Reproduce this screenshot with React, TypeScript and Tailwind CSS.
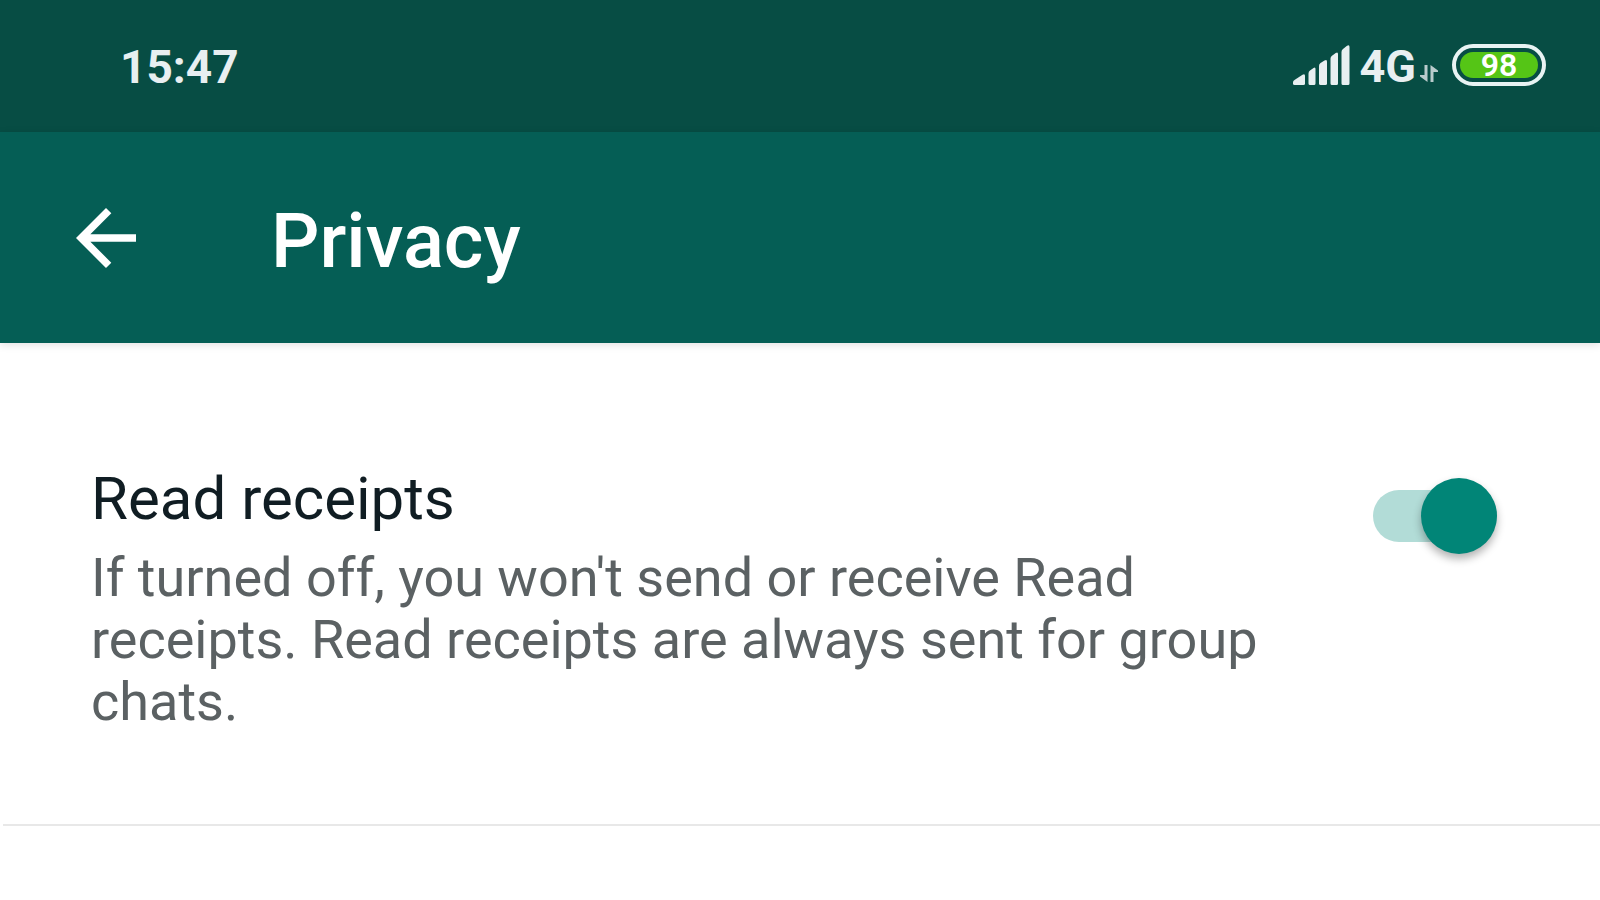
import { useState } from "react";

function SignalIcon() {
  return (
    <svg viewBox="0 0 57 40" className="h-10 w-[57px]" fill="#e8eff1" aria-hidden="true">
      <path d="M1.500 35 9.500 29.800Q12 28.300 12 31V38.500Q12 40 10.500 40H1.500Q0 40 0 38.500V37.300Q0 36 1.500 35Z" />
      <path d="M15.500 28.500Q15.500 26.600 17 25.600L20.500 23Q22.500 21.600 22.500 24V38.500Q22.500 40 21 40H17Q15.500 40 15.500 38.500Z" />
      <path d="M26 21Q26 19 27.500 18L31.500 15.500Q34 14 34 16.500V38.500Q34 40 32.500 40H27.500Q26 40 26 38.500Z" />
      <path d="M37.500 13.500Q37.500 11.700 39 10.700L42.700 8Q45 6.500 45 9V38.500Q45 40 43.500 40H39Q37.500 40 37.500 38.500Z" />
      <path d="M48.500 7Q48.500 5 50 4L53.700 1Q56.500-.8 56.500 2V38.500Q56.500 40 55 40H50Q48.500 40 48.500 38.500Z" />
    </svg>
  );
}

function DataArrowsIcon() {
  return (
    <svg viewBox="0 0 18 17" className="h-[17px] w-[18px]" fill="#b9cbcc" aria-hidden="true">
      <path d="M4.500 0H7.500V17L0 11.500V10H4.500Z" />
      <path d="M10.500 17H13.500V7H18V5.500L10.500 0Z" />
    </svg>
  );
}

function StatusBar() {
  return (
    <div className="flex h-[132px] items-center justify-between bg-[#074d44] pb-0.5 pl-30 pr-[54px] font-bold text-[#e8eff1]">
      <time className="pt-1 text-[46px] leading-[56px]">15:47</time>
      <div className="flex items-center">
        <SignalIcon />
        <span className="ml-2.5 pt-1 text-[45px] leading-[56px]">4G</span>
        <div className="ml-1 pt-4">
          <DataArrowsIcon />
        </div>
        <div className="ml-3.5 h-[42px] w-[94px] rounded-full border-4 border-[#e8f3f3] p-1">
          <div className="flex h-full items-center justify-center rounded-full bg-[#55c516] text-[32px] font-semibold leading-none text-white">
            98
          </div>
        </div>
      </div>
    </div>
  );
}

function AppBar() {
  return (
    <header className="relative flex h-[211px] items-center bg-[#055e55] pl-[76px] text-white shadow-[0_2px_8px_rgba(0,0,0,0.12)]">
      <button type="button" aria-label="Back" className="cursor-pointer">
        <svg viewBox="0 0 60 60" className="size-15" fill="currentColor" aria-hidden="true">
          <path d="M60 26.250H14.360L35.330 5.290L30 0L0 30L30 60L35.290 54.710L14.360 33.750H60Z" />
        </svg>
      </button>
      <h1 className="ml-[135px] pt-1.5 text-[76px] font-medium leading-[88px]">Privacy</h1>
    </header>
  );
}

export default function App() {
  const [enabled, setEnabled] = useState(true);

  return (
    <div className="min-h-screen bg-white font-[Roboto,sans-serif]">
      <StatusBar />
      <AppBar />
      <main>
        <section className="ml-[3px] flex items-start justify-between border-b-2 border-[#e8e8e8] pb-[91px] pl-22 pr-[103px] pt-[120px]">
          <div className="max-w-[1190px]">
            <label htmlFor="read-receipts" className="block text-[60px] leading-[72px] text-[#101d23]">
              Read receipts
            </label>
            <p
              id="read-receipts-note"
              className="mt-3 text-[54px] leading-[62px] text-[#5b6163] [font-variant-ligatures:none]"
            >
              If turned off, you won't send or receive Read receipts. Read receipts are always sent for group chats.
            </p>
          </div>
          <input
            id="read-receipts"
            type="checkbox"
            role="switch"
            aria-describedby="read-receipts-note"
            checked={enabled}
            onChange={(event) => setEnabled(event.target.checked)}
            className="mt-[27px] flex h-[52px] w-[124px] shrink-0 cursor-pointer appearance-none items-center rounded-full bg-[#bdbdbd] before:size-[76px] before:shrink-0 before:rounded-full before:bg-[#f1f1f1] before:shadow-[0_5px_8px_rgba(0,0,0,0.3)] checked:justify-end checked:bg-[#b2dcd7] checked:before:bg-[#018577]"
          />
        </section>
      </main>
    </div>
  );
}
